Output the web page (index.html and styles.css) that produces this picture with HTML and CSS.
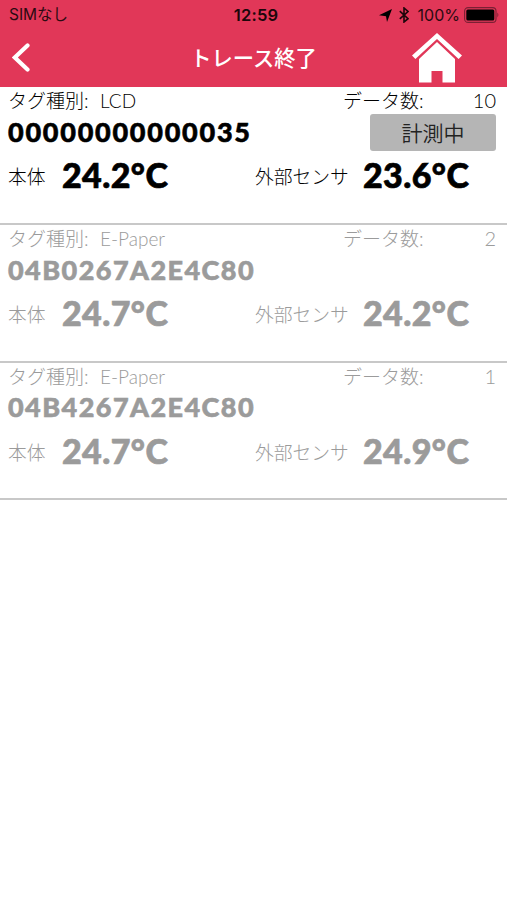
FILE: index.html
```html
<!DOCTYPE html>
<html lang="ja">
<head>
    <meta charset="UTF-8">
    <title>トレース終了</title>
    <link rel="stylesheet" href="styles.css">
</head>
<body>
    <header class="header">
        <div class="status-bar">
            <span class="carrier">SIMなし</span>
            <span class="clock">12:59</span>
            <div class="status-icons">
                <svg class="location" width="13" height="13" viewBox="0 0 13 13">
                    <path d="M13 0L8 13L7 7.2L0 6.2z"/>
                </svg>
                <svg class="bluetooth" width="10" height="16" viewBox="0 0 10 16">
                    <path d="M0.8 4.2L9 11.7L5 15V1L9 4.5L0.8 11.8"/>
                </svg>
                <span class="percent">100%</span>
                <svg class="battery" width="36" height="16" viewBox="0 0 36 16">
                    <rect class="battery-frame" x="0.6" y="0.6" width="31.4" height="14.8" rx="3.5"/>
                    <rect x="2.3" y="2.5" width="28" height="11" rx="1.5"/>
                    <path class="battery-tip" d="M33.4 5.6q2 2.4 0 4.8z"/>
                </svg>
            </div>
        </div>
        <nav class="nav-bar">
            <svg class="back" width="18" height="29" viewBox="0 0 18 29">
                <path d="M15.5 2.5L2.8 14.5L15.5 26.5"/>
            </svg>
            <h1 class="title">トレース終了</h1>
            <svg class="home" width="50" height="50" viewBox="0 0 50 50">
                <path d="M25 0L50 22.5L46.6 26L25 6L3.4 26L0 22.5z"/>
                <path d="M25 9L43 26V49.5H30.5V38H19.5V49.5H7V26z"/>
            </svg>
        </nav>
    </header>

    <main class="tag-list">
        <section class="tag active">
            <div class="tag-info">
                <span class="label">タグ種別:</span>
                <span>LCD</span>
                <span class="label">データ数:</span>
                <span class="count">10</span>
            </div>
            <div class="tag-id">
                <span>00000000000035</span>
                <button class="measuring">計測中</button>
            </div>
            <div class="tag-temp">
                <span class="sensor">本体</span>
                <span class="temp">24.2°C</span>
                <span class="sensor">外部センサ</span>
                <span class="temp">23.6°C</span>
            </div>
        </section>
        <section class="tag">
            <div class="tag-info">
                <span class="label">タグ種別:</span>
                <span>E-Paper</span>
                <span class="label">データ数:</span>
                <span class="count">2</span>
            </div>
            <div class="tag-id"><span>04B0267A2E4C80</span></div>
            <div class="tag-temp">
                <span class="sensor">本体</span>
                <span class="temp">24.7°C</span>
                <span class="sensor">外部センサ</span>
                <span class="temp">24.2°C</span>
            </div>
        </section>
        <section class="tag">
            <div class="tag-info">
                <span class="label">タグ種別:</span>
                <span>E-Paper</span>
                <span class="label">データ数:</span>
                <span class="count">1</span>
            </div>
            <div class="tag-id"><span>04B4267A2E4C80</span></div>
            <div class="tag-temp">
                <span class="sensor">本体</span>
                <span class="temp">24.7°C</span>
                <span class="sensor">外部センサ</span>
                <span class="temp">24.9°C</span>
            </div>
        </section>
    </main>
</body>
</html>
```
FILE: styles.css
```css
:root {
    --header-red: #e13758;
    --inactive: #9b9b9b;
    --line: #c8c8c8;
}

* {
    box-sizing: border-box;
}

body {
    margin: 0;
    background: #fff;
    color: var(--inactive);
    font-family: Lato, "Noto Sans CJK JP", sans-serif;
}

.header {
    height: 87px;
    background: var(--header-red);
}

.status-bar {
    display: grid;
    grid-template-columns: 1fr auto 1fr;
    align-items: center;
    height: 30px;
    padding: 0 7px 0 9px;
    color: #2b0a11;
    font-family: Inter, "Noto Sans CJK JP", sans-serif;
    font-size: 16px;
    line-height: 30px;
}

.carrier {
    font-size: 15.5px;
}

.clock {
    margin: 0 -2px 0 1px;
    color: #1c060a;
    font-size: 16.5px;
    font-weight: 600;
    letter-spacing: 0.2px;
}

.status-icons {
    display: flex;
    align-items: center;
    justify-content: flex-end;
}

.bluetooth {
    margin: 0 9px 0 7px;
    fill: none;
    stroke: #1c060a;
    stroke-width: 1.6;
}

.battery {
    margin-left: 4px;
    fill: #000;
}

.battery-frame {
    fill: none;
    stroke: #7b2034;
    stroke-width: 1.1;
}

.battery-tip {
    fill: #7b2034;
}

.nav-bar {
    display: grid;
    grid-template-columns: 1fr auto 1fr;
    align-items: center;
    height: 55px;
    padding: 0 45px 0 12px;
}

.back {
    fill: none;
    stroke: #fff;
    stroke-width: 4.2;
    stroke-linecap: round;
}

.title {
    margin: 0 -17px 0 16px;
    color: #fff;
    font-size: 21.3px;
    font-weight: 500;
    line-height: 30px;
}

.home {
    justify-self: end;
    fill: #fff;
}

.tag {
    height: 137.5px;
    padding: 0 11px 0 8px;
    border-bottom: 2px solid var(--line);
}

.tag.active {
    height: 138px;
    color: #000;
}

.tag-info {
    display: grid;
    grid-template-columns: 92px 243px 92px 1fr;
    height: 27px;
    font-size: 19px;
    font-weight: 300;
    line-height: 27px;
}

.count {
    font-size: 20px;
    text-align: right;
}

.tag-id {
    display: flex;
    align-items: center;
    justify-content: space-between;
    height: 37px;
    padding-bottom: 3px;
    font-size: 27px;
    font-weight: 900;
    letter-spacing: 1.45px;
    -webkit-text-stroke: 0.6px currentColor;
}

.active .tag-id {
    letter-spacing: 1.75px;
}

.measuring {
    width: 126px;
    height: 37px;
    margin-top: 2px;
    padding: 0;
    border: 0;
    border-radius: 3px;
    background: #b5b5b5;
    color: #222;
    font: 350 21px/35px Lato, "Noto Sans CJK JP", sans-serif;
    -webkit-text-stroke: 0;
}

.tag-temp {
    display: grid;
    grid-template-columns: 54px 193px 108px 1fr;
    height: 48px;
    line-height: 48px;
}

.sensor {
    padding-top: 2px;
    font-size: 18.8px;
    font-weight: 300;
}

.temp {
    font-size: 34px;
    font-weight: 900;
    letter-spacing: 0.4px;
    -webkit-text-stroke: 0.7px currentColor;
}
```
